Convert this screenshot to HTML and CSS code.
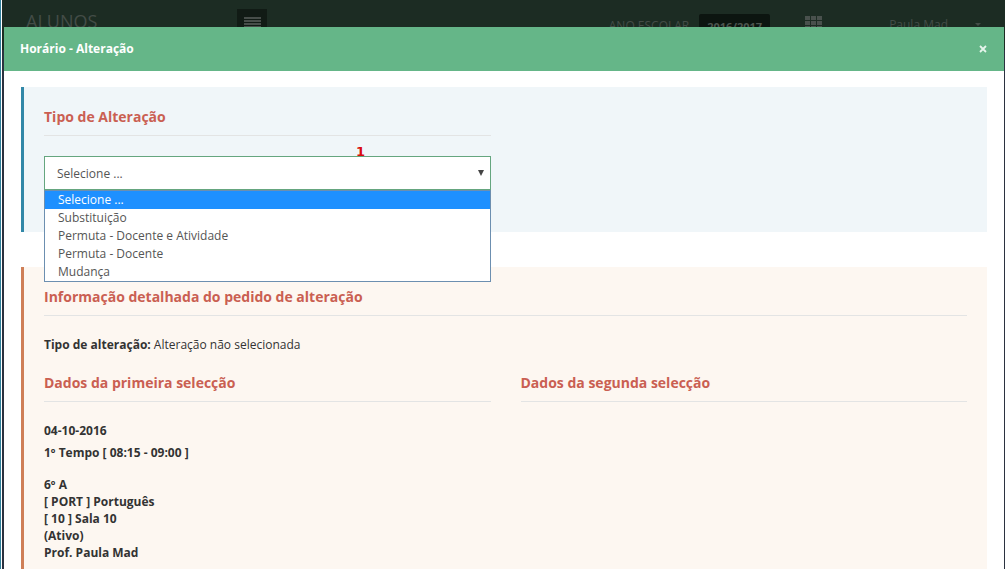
FILE: index.html
```html
<!DOCTYPE html>
<html lang="pt">
<head>
<meta charset="utf-8">
<title>Horário - Alteração</title>
<link rel="stylesheet" href="styles.css">
</head>
<body>
<div class="app">
  <header class="topbar">
    <span class="brand">ALUNOS</span>
    <button class="menu-toggle" type="button" aria-label="Menu">
      <svg width="17" height="12" viewBox="0 0 17 12"><path d="M0 1h17M0 4h17M0 7h17M0 10h17" stroke="currentColor" stroke-width="1.6"/></svg>
    </button>
    <span class="year-label">ANO ESCOLAR</span>
    <span class="year">2016/2017</span>
    <button class="grid-button" type="button" aria-label="Aplicações">
      <svg width="18" height="16" viewBox="0 0 18 16" fill="currentColor"><path d="M0 0h5v4H0zM6 0h5v4H6zM12 0h5v4h-5zM0 5h5v4H0zM6 5h5v4H6zM12 5h5v4h-5zM0 10h5v4H0zM6 10h5v4H6zM12 10h5v4h-5z"/></svg>
    </button>
    <a class="user" href="#">Paula Mad <span class="caret"></span></a>
  </header>
</div>

<div class="modal" role="dialog" aria-labelledby="modal-title">
  <div class="modal-header">
    <h1 class="modal-title" id="modal-title">Horário - Alteração</h1>
    <button class="close" type="button" aria-label="Fechar">
      <svg width="8" height="8" viewBox="0 0 8 8"><path d="M1 1l6 6M7 1l-6 6" stroke="currentColor" stroke-width="1.8"/></svg>
    </button>
  </div>
  <div class="modal-body">
    <section class="note note-info">
      <div class="columns">
        <div class="column">
          <h2 class="heading"><label for="tipo">Tipo de Alteração</label></h2>
          <div class="select-wrap">
            <span class="marker">1</span>
            <select class="select" id="tipo">
              <option>Selecione ...</option>
              <option>Substituição</option>
              <option>Permuta - Docente e Atividade</option>
              <option>Permuta - Docente</option>
              <option>Mudança</option>
            </select>
            <svg class="arrow" width="6" height="6" viewBox="0 0 6 6"><path d="M0 0h6L3 6z" fill="currentColor"/></svg>
            <ul class="options" role="listbox" aria-label="Tipo de Alteração">
              <li class="option option-active" role="option" aria-selected="true">Selecione ...</li>
              <li class="option" role="option">Substituição</li>
              <li class="option" role="option">Permuta - Docente e Atividade</li>
              <li class="option" role="option">Permuta - Docente</li>
              <li class="option" role="option">Mudança</li>
            </ul>
          </div>
        </div>
      </div>
    </section>
    <section class="note note-warning">
      <h2 class="heading">Informação detalhada do pedido de alteração</h2>
      <p class="summary"><strong>Tipo de alteração:</strong> Alteração não selecionada</p>
      <div class="columns">
        <div class="column">
          <h3 class="heading">Dados da primeira selecção</h3>
          <div class="details">
            <p class="slot">04-10-2016</p>
            <p class="slot">1º Tempo [ 08:15 - 09:00 ]</p>
            <p class="lesson">6º A<br>[ PORT ] Português<br>[ 10 ] Sala 10<br>(Ativo)<br>Prof. Paula Mad</p>
          </div>
        </div>
        <div class="column">
          <h3 class="heading">Dados da segunda selecção</h3>
        </div>
      </div>
    </section>
  </div>
</div>
</body>
</html>
```
FILE: styles.css
```css
* { box-sizing: border-box; }

body {
  margin: 0;
  height: 100vh;
  overflow: hidden;
  font: 12px/17px "Open Sans", sans-serif;
  color: #333;
  background: #fff;
}

h1, h2, h3, p, ul { margin: 0; padding: 0; }

button { border: 0; padding: 0; font: inherit; }

.app {
  height: 100vh;
  margin-right: 1px;
  border-left: 1px solid #2f7f9b;
  padding-left: 1px;
  background: #2b3240 content-box;
}

.topbar {
  display: flex;
  align-items: flex-start;
  height: 50px;
  padding: 0 24px;
  background: #1c2c23;
  color: #434c47;
}

.brand { flex: 0 0 211px; padding-top: 9px; font-size: 18px; line-height: 24px; }

.menu-toggle {
  display: flex;
  align-items: flex-start;
  justify-content: center;
  margin-top: 9px;
  margin-right: auto;
  width: 30px;
  height: 32px;
  padding-top: 8px;
  background: #111b15;
  color: #59605c;
}

.year-label { margin: 17px 10px 0 0; }

.year {
  margin-top: 14px;
  padding: 4px 8px;
  border-radius: 2px;
  background: #0c1510;
  color: #4d554f;
  font-size: 11px;
  font-weight: 700;
}

.grid-button { margin: 16px 66px 0 35px; background: none; color: #49514d; line-height: 0; }

.user { display: flex; gap: 27px; margin-top: 16px; color: inherit; text-decoration: none; }

.caret { margin-top: 7px; border: 3px solid transparent; border-top-color: currentColor; }

.modal {
  position: absolute;
  inset: 27px 2px 0 4px;
  overflow: hidden;
  background: #fff;
}

.modal-header {
  display: flex;
  align-items: center;
  justify-content: space-between;
  height: 44px;
  padding: 0 17px 0 16px;
  background: #65b688;
  color: #fff;
}

.modal-title { font-size: 12px; line-height: 18px; font-weight: 700; }

.close { display: flex; background: none; color: #e6f5ec; }

.modal-body { padding: 16px 17px; }

.note { padding: 20px; border-left: 3px solid; }

.note-info { min-height: 145px; margin-bottom: 35px; background: #f0f6f9; border-color: #3288a8; }

.note-warning { background: #fdf7f1; border-color: #cf7f57; min-height: 320px; }

.columns { display: grid; grid-template-columns: 1fr 1fr; gap: 30px; }

.heading {
  margin-bottom: 20px;
  padding-bottom: 8px;
  border-bottom: 1px solid #e3e4e4;
  color: #ca5f52;
  font-size: 14px;
  line-height: 20px;
  font-weight: 700;
}

.select-wrap { position: relative; }

.marker {
  position: absolute;
  left: 312px;
  top: -12px;
  z-index: 1;
  color: #d90d0d;
  font: 700 13px/16px "DejaVu Sans", sans-serif;
}

.select {
  display: block;
  width: 100%;
  height: 34px;
  padding: 0 12px;
  border: 1px solid #65a67f;
  border-radius: 0;
  background: #fff;
  color: #555;
  font: inherit;
  appearance: none;
}

.arrow { position: absolute; right: 7px; top: 14px; color: #444; }

.options {
  position: absolute;
  left: 0;
  right: 0;
  top: 34px;
  z-index: 1;
  border: 1px solid #6c8fb0;
  background: #fff;
  list-style: none;
}

.option { padding: 0 13px; line-height: 18px; color: #555; }

.option-active { background: #1e90ff; color: #fff; }

.summary { margin-bottom: 20px; }

.details { font-weight: 700; }

.slot { margin-bottom: 5px; }

.lesson { margin-top: 15px; }
```
